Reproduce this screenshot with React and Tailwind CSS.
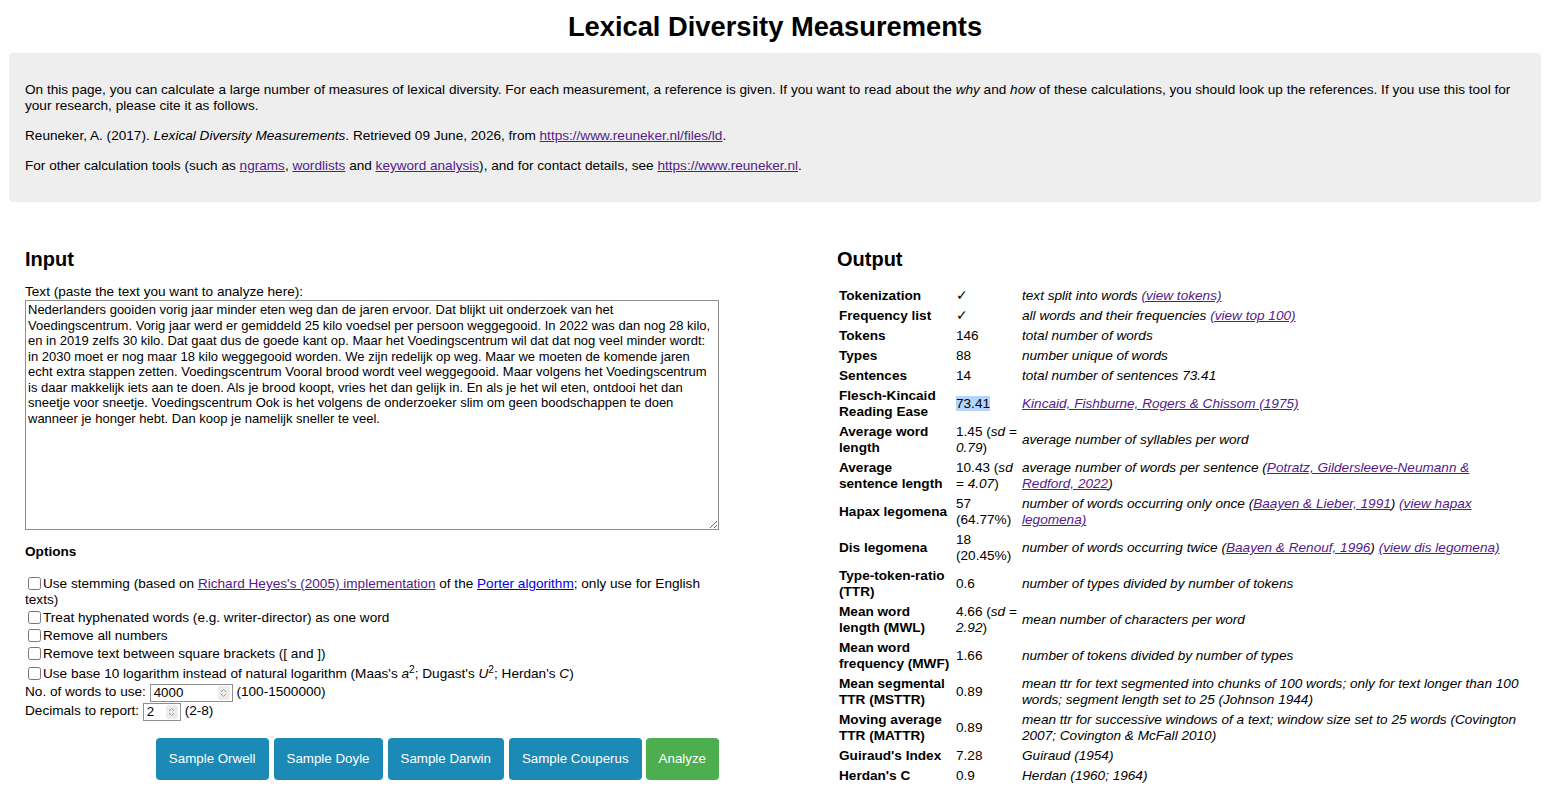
import React from 'react';

const sampleText =
  'Nederlanders gooiden vorig jaar minder eten weg dan de jaren ervoor. Dat blijkt uit onderzoek van het Voedingscentrum. Vorig jaar werd er gemiddeld 25 kilo voedsel per persoon weggegooid. In 2022 was dan nog 28 kilo, en in 2019 zelfs 30 kilo. Dat gaat dus de goede kant op. Maar het Voedingscentrum wil dat dat nog veel minder wordt: in 2030 moet er nog maar 18 kilo weggegooid worden. We zijn redelijk op weg. Maar we moeten de komende jaren echt extra stappen zetten. Voedingscentrum Vooral brood wordt veel weggegooid. Maar volgens het Voedingscentrum is daar makkelijk iets aan te doen. Als je brood koopt, vries het dan gelijk in. En als je het wil eten, ontdooi het dan sneetje voor sneetje. Voedingscentrum Ook is het volgens de onderzoeker slim om geen boodschappen te doen wanneer je honger hebt. Dan koop je namelijk sneller te veel.';

const A = ({ children, blue }) => (
  <a href="#" className={`underline ${blue ? 'text-[#0000ee]' : 'text-[#551a8b]'}`}>
    {children}
  </a>
);

// label, value, description
const rows = [
  ['Tokenization', '✓', <>text split into words <A>(view tokens)</A></>],
  ['Frequency list', '✓', <>all words and their frequencies <A>(view top 100)</A></>],
  ['Tokens', '146', 'total number of words'],
  ['Types', '88', 'number unique of words'],
  ['Sentences', '14', 'total number of sentences 73.41'],
  ['Flesch-Kincaid Reading Ease', <span className="bg-[#b4d5fe]">73.41</span>, <A>Kincaid, Fishburne, Rogers &amp; Chissom (1975)</A>],
  ['Average word length', <>1.45 (<i>sd</i> = <i>0.79</i>)</>, 'average number of syllables per word'],
  [
    'Average sentence length',
    <>10.43 (<i>sd</i> = <i>4.07</i>)</>,
    <>average number of words per sentence (<A>Potratz, Gildersleeve-Neumann &amp; Redford, 2022</A>)</>,
  ],
  [
    'Hapax legomena',
    '57 (64.77%)',
    <>number of words occurring only once (<A>Baayen &amp; Lieber, 1991</A>) <A>(view hapax legomena)</A></>,
  ],
  [
    'Dis legomena',
    '18 (20.45%)',
    <>number of words occurring twice (<A>Baayen &amp; Renouf, 1996</A>) <A>(view dis legomena)</A></>,
  ],
  ['Type-token-ratio (TTR)', '0.6', 'number of types divided by number of tokens'],
  ['Mean word length (MWL)', <>4.66 (<i>sd</i> = <i>2.92</i>)</>, 'mean number of characters per word'],
  ['Mean word frequency (MWF)', '1.66', 'number of tokens divided by number of types'],
  [
    'Mean segmental TTR (MSTTR)',
    '0.89',
    'mean ttr for text segmented into chunks of 100 words; only for text longer than 100 words; segment length set to 25 (Johnson 1944)',
  ],
  [
    'Moving average TTR (MATTR)',
    '0.89',
    'mean ttr for successive windows of a text; window size set to 25 words (Covington 2007; Covington & McFall 2010)',
  ],
  ["Guiraud's Index", '7.28', 'Guiraud (1954)'],
  ["Herdan's C", '0.9', 'Herdan (1960; 1964)'],
];

const Check = ({ children, className = 'leading-[18px]' }) => (
  <div className={className}>
    <input type="checkbox" className="mr-[2px] ml-[3px] h-[13px] w-[13px] align-[-2px]" />
    {children}
  </div>
);

// number field with the little up/down stepper on the right
const NumberField = ({ value, width }) => (
  <span className={`inline-flex h-[18px] items-center border border-[#8f8f8f] bg-white ${width}`}>
    <input
      type="text"
      defaultValue={value}
      className="h-full min-w-0 flex-1 px-[3px] text-[13.33px] text-black outline-none"
    />
    <span className="mr-[2px] flex h-[14px] w-[12px] items-center justify-center rounded-[2px] bg-[#ececec]">
      <svg width="7" height="10" viewBox="0 0 7 10" fill="none" stroke="#9a9a9a" strokeWidth="1">
        <path d="M1 4 L3.5 1.5 L6 4" />
        <path d="M1 6 L3.5 8.5 L6 6" />
      </svg>
    </span>
  </span>
);

export default function App() {
  return (
    <div className="min-h-screen bg-white pr-[12px] pl-[9px] text-[13.6px] text-black [font-family:'Liberation_Sans',Arial,sans-serif]">
      <h1 className="pt-[12px] text-center text-[27.3px] font-bold leading-[30px]">Lexical Diversity Measurements</h1>

      {/* intro */}
      <div className="mt-[11px] space-y-[14px] rounded bg-[#eeeeee] px-4 pt-[29px] pb-[28px] leading-4">
        <p>
          On this page, you can calculate a large number of measures of lexical diversity. For each measurement, a
          reference is given. If you want to read about the <i>why</i> and <i>how</i> of these calculations, you should
          look up the references. If you use this tool for your research, please cite it as follows.
        </p>
        <p>
          Reuneker, A. (2017). <i>Lexical Diversity Measurements</i>. Retrieved 09 June, 2026, from{' '}
          <A>https://www.reuneker.nl/files/ld</A>.
        </p>
        <p>
          For other calculation tools (such as <A>ngrams</A>, <A>wordlists</A> and <A>keyword analysis</A>), and for
          contact details, see <A>https://www.reuneker.nl</A>.
        </p>
      </div>

      <div className="flex px-4 pt-[45px]">
        {/* input column */}
        <div className="w-[694px] shrink-0">
          <h2 className="text-[20px] font-bold leading-6">Input</h2>
          <div className="mt-[13px] leading-4">Text (paste the text you want to analyze here):</div>
          <textarea
            defaultValue={sampleText}
            className="block h-[230px] w-[694px] border border-[#8f8f8f] px-[2px] py-[1px] text-[13px] leading-[15.5px] text-black outline-none"
          />
          <div className="mt-[14px] font-bold leading-4">Options</div>
          <div className="mt-[16px]">
            <Check className="pb-[1px] leading-4">
              Use stemming (based on <A>Richard Heyes's (2005) implementation</A> of the <A blue>Porter algorithm</A>;
              only use for English texts)
            </Check>
            <Check>Treat hyphenated words (e.g. writer-director) as one word</Check>
            <Check>Remove all numbers</Check>
            <Check>Remove text between square brackets ([ and ])</Check>
            <Check className="h-[20px] pt-[2px] leading-[18px]">
              Use base 10 logarithm instead of natural logarithm (Maas's <i>a</i>
              <sup>2</sup>; Dugast's <i>U</i>
              <sup>2</sup>; Herdan's <i>C</i>)
            </Check>
            <div className="flex h-[19px] items-center">
              No. of words to use:&nbsp;
              <NumberField value="4000" width="w-[83px]" />
              &nbsp;(100-1500000)
            </div>
            <div className="flex h-[19px] items-center">
              Decimals to report:&nbsp;
              <NumberField value="2" width="w-[38px]" />
              &nbsp;(2-8)
            </div>
          </div>
          <div className="mt-[17px] flex justify-end">
            <div className="flex gap-[5px]">
              {['Sample Orwell', 'Sample Doyle', 'Sample Darwin', 'Sample Couperus'].map((label) => (
                <button key={label} className="h-[42px] rounded bg-[#1b8ab6] px-[13px] text-[13.33px] text-white">
                  {label}
                </button>
              ))}
            </div>
            <button className="ml-[4px] h-[42px] rounded bg-[#4cae4f] px-[13px] text-[13.33px] text-white">
              Analyze
            </button>
          </div>
        </div>

        {/* output column */}
        <div className="ml-[118px] flex-1">
          <h2 className="text-[20px] font-bold leading-6">Output</h2>
          <table className="mt-[15px] w-full border-collapse leading-4">
            <tbody>
              {rows.map(([label, value, desc]) => (
                <tr key={label}>
                  <td className="w-[117px] py-[2px] pr-[2px] pl-[2px] align-middle font-bold">{label}</td>
                  <td className="w-[66px] py-[2px] pr-[2px] pl-[2px] align-middle">{value}</td>
                  <td className="py-[2px] pl-[2px] align-middle italic">{desc}</td>
                </tr>
              ))}
            </tbody>
          </table>
        </div>
      </div>
    </div>
  );
}
